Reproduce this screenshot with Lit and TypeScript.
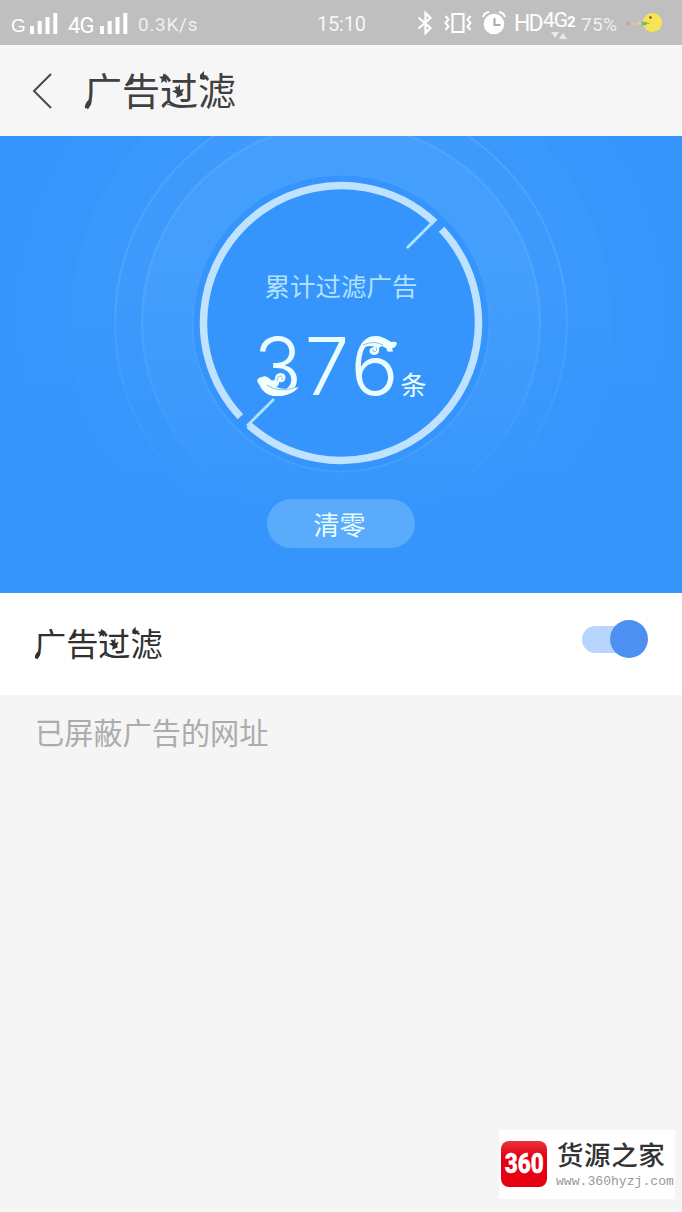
import { LitElement, html, svg, css } from "lit";
import { customElement, property } from "lit/decorators.js";

@customElement("status-bar")
class StatusBar extends LitElement {
  static styles = css`
    :host { display: flex; align-items: center; height: 45px; background: #bfbfbf; color: #fff; font-family: Roboto, "Liberation Sans", sans-serif; }
    svg { display: block; overflow: visible; flex: none; }
    .group { display: flex; align-items: center; height: 45px; }
    .left { width: 317px; padding-left: 11px; box-sizing: border-box; }
    .g { width: 19px; font: 400 19px/40px "Liberation Sans"; padding-top: 7px; }
    .fg { width: 32px; font-size: 22px; padding-top: 6px; letter-spacing: -0.8px; }
    .bars { margin-right: 10px; }
    .speed { font-size: 19px; letter-spacing: 0.7px; padding-top: 4px; color: #efefef; }
    .time { font-size: 20px; width: 99px; padding-top: 3px; letter-spacing: -0.2px; color: #f6f6f6; }
    .right { width: 265px; }
    .vibrate { margin-left: 11px; }
    .alarm { margin-left: 10px; }
    .hd { width: 29px; font-size: 23px; letter-spacing: -1.9px; margin-left: 8px; padding-top: 1px; }
    .net { display: flex; flex-direction: column; width: 38px; height: 34px; }
    .netline { font-size: 21px; line-height: 22px; letter-spacing: -1px; padding-top: 3px; white-space: nowrap; }
    .two { font-size: 15px; font-weight: 700; }
    .arrows { margin: -1px 0 0 8px; }
    .pct { font-size: 19px; width: 45px; padding-top: 4px; letter-spacing: 0.3px; color: #f0f0f0; }
  `;
  bars() {
    return html`<svg class="bars" width="28" height="22" viewBox="0 0 28 22" fill="#fff"><path d="M0 14h4v8H0zM7.700 9h4v13h-4zM15.500 5h4v17h-4zM23.300 1h4v21h-4z"/></svg>`;
  }
  render() {
    return html`
      <div class="group left">
        <span class="g">G</span>${this.bars()}
        <span class="fg">4G</span>${this.bars()}
        <span class="speed">0.3K/s</span>
      </div>
      <div class="group time">15:10</div>
      <div class="group right">
        <svg width="17" height="26" viewBox="0 0 17 26" fill="none" stroke="#fff" stroke-width="2.200"><path d="M2.500 7.500l12 10.500-5 5V3l5 5-12 10.500"/></svg>
        <svg class="vibrate" width="28" height="22" viewBox="0 0 28 22" fill="none" stroke="#fff" stroke-width="2.200"><path d="M8.500 2h11v18h-11z"/><path stroke-width="2" d="M1.500 4l3 3.500-3 3.500 3 3.500-3 3.500M26.500 4l-3 3.500 3 3.500-3 3.500 3 3.500"/></svg>
        <svg class="alarm" width="24" height="24" viewBox="0 0 24 24" fill="none"><circle cx="12" cy="13" r="10.300" fill="#fff"/><path d="M1 6q1-4 6-5M17 1q5 1 6 5" stroke="#fff" stroke-width="2"/><path d="M12.500 7v7h6" stroke="#aaa" stroke-width="2"/></svg>
        <span class="hd">HD</span>
        <div class="net"><span class="netline">4G<span class="two">2</span></span><svg class="arrows" width="16" height="7" viewBox="0 0 16 7" fill="#e9e9e9"><path d="M0 0h8L4 6zM8 7h8l-4-6z"/></svg></div>
        <span class="pct">75%</span>
        <svg width="38" height="20" viewBox="0 0 38 20"><circle cx="26.500" cy="9.500" r="9.500" fill="#f8e352"/><path d="M15 8.500l10 1.500-10 3z" fill="#8fbd86"/><circle cx="24.500" cy="4.500" r="1.300" fill="#76551c"/><circle cx="2" cy="10.500" r="2" fill="#df9b9b"/><circle cx="8" cy="10.500" r="1.800" fill="#e3c0a0"/><circle cx="13.500" cy="10.500" r="1.800" fill="#d9d894"/><circle cx="19" cy="10.500" r="1.800" fill="#70b777"/></svg>
      </div>`;
  }
}

@customElement("ornate-title")
class OrnateTitle extends LitElement {
  @property() text = "";
  static styles = css`
    :host { display: grid; width: 4em; height: 1em; line-height: 1; }
    .text, .decor { grid-area: 1 / 1; }
    .text { white-space: nowrap; font-family: "Noto Sans CJK SC", sans-serif; }
    .decor { width: 4em; height: 1em; display: block; overflow: visible; }
  `;
  render() {
    return html`<span class="text">${this.text}</span>
      <svg class="decor" viewBox="0 0 152 38" fill="currentColor">
        <path d="M1 38.500q-1-6 6-10 2 6-3 9z"/>
        <path d="M42 16l3-6 5-2-1 6z"/>
        <path d="M80 3l1.500 3.500 3.500.3-2.700 2.500.8 3.700-3.100-2-3.100 2 .8-3.700-2.700-2.500 3.500-.3z"/>
        <path d="M88 21l4-1 4-6v6l4-1-2 4 1 2-7 3 1-4z"/>
        <path d="M80 33q16 5 34 1-17 8-34-1z"/>
        <path d="M116 5l4-4v4l4 1-4 4-4-1z"/>
      </svg>`;
  }
}

@customElement("filter-hero")
class FilterHero extends LitElement {
  @property({ type: Number }) count = 376;
  static styles = css`
    :host { display: grid; height: 457px; overflow: hidden; background: #3595fc; color: #e9fdff; font-family: "Noto Sans CJK SC", sans-serif; }
    .art, .content { grid-area: 1 / 1; }
    .art { display: block; width: 682px; height: 457px; }
    .content { display: flex; flex-direction: column; align-items: center; }
    .label { margin-top: 131px; font-size: 25.5px; line-height: 36px; color: #b2e2ff; }
    .total { display: grid; width: 170px; height: 82px; margin: 22px 0 0 1px; }
    .figures { grid-area: 1 / 1; display: flex; align-items: baseline; line-height: 82px; white-space: nowrap; }
    .number { font: 300 80px/82px Inter, sans-serif; width: 144px; letter-spacing: 2.5px; margin-left: -3px; margin-right: 3px; }
    .unit { font-size: 26px; line-height: 30px; }
    .cloud { grid-area: 1 / 1; width: 170px; height: 82px; }
    button { all: unset; box-sizing: border-box; width: 148px; height: 49px; margin-top: 92px; border-radius: 25px; background: #5babfc; text-align: center; font-size: 26px; line-height: 46px; padding-right: 3px; }
  `;
  rings() {
    const layers = [[325, 0.07], [271, 0.12], [226, 0.12], [199, 0.28]];
    return layers.map(([r, o]) => svg`<circle cx="341" cy="187" r="${r}" fill="url(#fade)" fill-opacity="${o}"/>`);
  }
  render() {
    return html`
      <svg class="art" viewBox="0 0 682 457" fill="none">
        <defs>
          <linearGradient id="fade" gradientUnits="userSpaceOnUse" x1="0" y1="0" x2="0" y2="390"><stop offset="0.3" stop-color="#62b1ff" stop-opacity=".65"/><stop offset="1" stop-color="#62b1ff" stop-opacity="0"/></linearGradient>
          <linearGradient id="line" gradientUnits="userSpaceOnUse" x1="0" y1="0" x2="0" y2="390"><stop offset=".4" stop-color="#58a9ff"/><stop offset=".95" stop-color="#58a9ff" stop-opacity="0"/></linearGradient>
        </defs>
        ${this.rings()}
        <circle cx="341" cy="187" r="226" stroke="url(#line)" stroke-width="2" opacity=".6"/>
        <circle cx="341" cy="187" r="199" stroke="url(#line)" stroke-width="2.500" opacity=".6"/>
        <circle cx="341" cy="187" r="148.500" fill="#3595fc" stroke="#479ffd" stroke-width="2"/>
        <circle cx="341" cy="187" r="137.500" pathLength="360" stroke="#bfe3ff" stroke-width="7.500" stroke-dasharray="176 4 175 5" stroke-dashoffset="-37" transform="rotate(100 341 187)"/>
        <g stroke="#afe4ff" stroke-width="2.800"><path d="M407 112l28-28M274 263l-27 27"/></g>
      </svg>
      <div class="content">
        <div class="label">累计过滤广告</div>
        <div class="total">
          <div class="figures"><span class="number">${this.count}</span><span class="unit">条</span></div>
          <svg class="cloud" viewBox="0 0 170 82" fill="none">
            <path d="M0 55q2-3 5-3 4-2 8 2 3 3 5 0 0-6 6-6 6 1 4 7-2 3-6 2 0 4-3 5 10 4 23 0-7 8-18 9Q7 72 5 61q-4-1-5-6z" fill="#f2ffff"/><path d="M10 60q11 8 27 3M20 56q0-5 4-5 4 3 0 4" stroke="#7db9e2" stroke-width=".9"/>
            <path d="M102 24q5-11 18-11 10 0 14 4 4-1 6 1-1 5-5 5-4 2-8-1-3-2-5 1 1 7-5 7-6-1-4-6 2-2 5-2-7-3-16 2z" fill="#f2ffff"/><path d="M106 20q11-5 20 0M119 22q2 4-2 5-3-2 0-3" stroke="#7db9e2" stroke-width=".9"/>
          </svg>
        </div>
        <button>清零</button>
      </div>`;
  }
}

@customElement("app-root")
class AppRoot extends LitElement {
  static styles = css`
    :host { display: block; width: 682px; height: 1212px; background: #f5f5f5; overflow: hidden; font-family: "Noto Sans CJK SC", sans-serif; }
    .screen { display: flex; flex-direction: column; height: 1212px; }
    header { display: flex; align-items: center; height: 91px; box-sizing: border-box; padding-left: 32px; background: #f6f6f6; color: #404040; }
    .back { display: block; margin-right: 32px; }
    .heading { font-size: 38px; margin-top: -4px; }
    .row { display: flex; align-items: center; justify-content: space-between; height: 102px; padding: 0 34px; background: #fff; color: #303030; }
    .name { font-size: 32.2px; margin-top: -4px; }
    .toggle { display: flex; align-items: center; width: 66px; height: 38px; margin-top: -10px; }
    .track { width: 40px; height: 27px; border-radius: 14px 0 0 14px; background: #b8d5fd; }
    .knob { width: 38px; height: 38px; margin-left: -12px; border-radius: 50%; background: #4c91f1; }
    .caption { padding-left: 35px; margin-top: 15px; font-size: 29.200px; line-height: 42px; color: #acacac; }
    .brand { display: flex; align-items: center; align-self: flex-end; box-sizing: border-box; width: 176px; height: 69px; margin: auto 7px 13px 0; padding-left: 2px; background: #fff; }
    .badge { flex: none; width: 46px; height: 46px; border-radius: 8px; background: linear-gradient(#e8343d, #e60012 35%); color: #fff; display: flex; align-items: center; justify-content: center; margin-top: -2px; }
    .mark { font: 900 28px/34px Roboto, sans-serif; transform: scaleX(.8); -webkit-text-stroke: .4px #fff; }
    .brandtext { margin: -6px 0 0 9px; color: #333; }
    .cn { font-size: 26.500px; line-height: 40px; letter-spacing: .6px; padding-left: 1px; white-space: nowrap; font-weight: 500; }
    .url { font: 13.100px/15px "Liberation Mono", monospace; color: #999; white-space: nowrap; }
  `;
  render() {
    return html`<div class="screen">
      <status-bar></status-bar>
      <header>
        <svg class="back" width="20" height="36" viewBox="0 0 20 36" fill="none" stroke="#494949" stroke-width="2"><path d="M19 1L2 18l17 17"/></svg>
        <ornate-title class="heading" text="广告过滤"></ornate-title>
      </header>
      <filter-hero .count=${376}></filter-hero>
      <div class="row"><ornate-title class="name" text="广告过滤"></ornate-title><div class="toggle"><span class="track"></span><span class="knob"></span></div></div>
      <div class="caption">已屏蔽广告的网址</div>
      <div class="brand">
        <div class="badge"><span class="mark">360</span></div>
        <div class="brandtext"><div class="cn">货源之家</div><div class="url">www.360hyzj.com</div></div>
      </div>
    </div>`;
  }
}
